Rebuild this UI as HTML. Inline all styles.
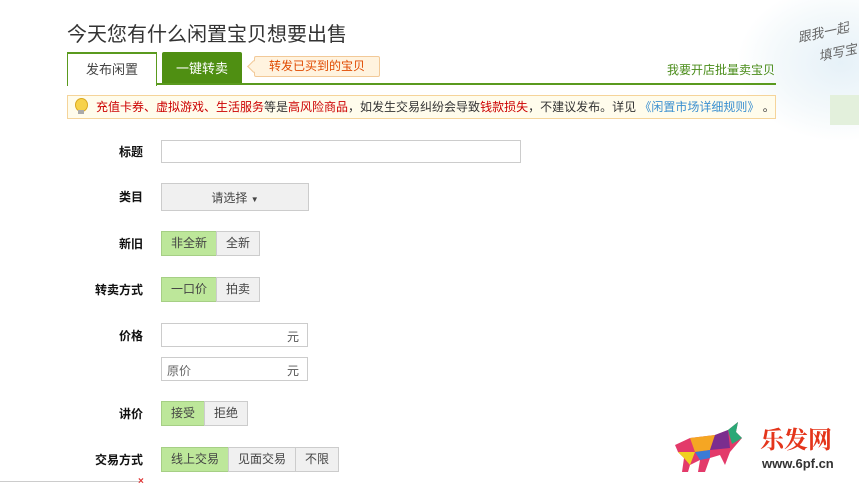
<!DOCTYPE html>
<html><head><meta charset="utf-8"><style>
body{margin:0;width:859px;height:484px;overflow:hidden;background:#fff;font-family:"Liberation Sans","Noto Sans CJK SC",sans-serif;font-size:12px;color:#333;position:relative}
.a{position:absolute}
.lab{position:absolute;right:716px;font-weight:bold;color:#111;font-size:12px;line-height:14px}
.btn{position:absolute;box-sizing:border-box;border:1px solid #ccc;background:#f0f0f0;text-align:center;color:#444;height:25px;line-height:23px}
.on{background:#bde79a;border-color:#a6cf85}
.inp{position:absolute;box-sizing:border-box;border:1px solid #ccc;background:#fff}
</style></head><body>
<div style="position:absolute;right:0;top:0;width:120px;height:140px;background:radial-gradient(ellipse at 85% 45%,#e6f1f8 0%,#f4f9fb 45%,#fff 72%)"></div>
<div class="a" style="left:797px;top:22px;color:#666;font-size:13px;transform:rotate(-12deg);font-style:italic">跟我一起</div>
<div class="a" style="left:818px;top:42px;color:#666;font-size:13px;transform:rotate(-12deg);font-style:italic">填写宝</div>
<div class="a" style="left:830px;top:95px;width:29px;height:30px;background:#e3f0dc"></div>

<div class="a" style="left:67px;top:18px;font-size:20px;color:#333">今天您有什么闲置宝贝想要出售</div>

<div class="a" style="left:67px;top:52px;width:90px;height:34px;box-sizing:border-box;border:1px solid #5a9a1e;border-bottom:none;border-top-width:2px;background:#fff;text-align:center;line-height:32px;font-size:13px;color:#444;z-index:2">发布闲置</div>
<div class="a" style="left:162px;top:52px;width:80px;height:32px;background:#4f8f12;color:#fff;text-align:center;line-height:34px;font-size:13px;border-radius:2px 2px 0 0">一键转卖</div>
<div class="a" style="left:254px;top:56px;width:126px;height:21px;box-sizing:border-box;border:1px solid #f2c998;background:#fff3df;color:#e04a00;text-align:center;line-height:19px;font-size:12px;border-radius:2px">转发已买到的宝贝</div>
<div class="a" style="left:249px;top:62px;width:8px;height:8px;background:#fff3df;border-left:1px solid #f2c998;border-bottom:1px solid #f2c998;transform:rotate(45deg)"></div>
<div class="a" style="left:667px;top:61px;color:#4a8c1a;font-size:12px">我要开店批量卖宝贝</div>
<div class="a" style="left:67px;top:83px;width:709px;height:2px;background:#5a9a1e"></div>

<div class="a" style="left:67px;top:95px;width:709px;height:24px;box-sizing:border-box;border:1px solid #f5d49a;background:#fffcec;line-height:22px;padding-left:28px;font-size:12px;color:#333;white-space:nowrap"><span style="color:#c00">充值卡券、虚拟游戏、生活服务</span>等是<span style="color:#c00">高风险商品</span>，如发生交易纠纷会导致<span style="color:#c00">钱款损失</span>，不建议发布。详见 <span style="color:#3a8fd0">《闲置市场详细规则》</span> 。</div>
<div class="a" style="left:75px;top:98px;width:11px;height:12px;border-radius:50%;background:#f7d24a;border:1px solid #d9a820"></div>
<div class="a" style="left:78px;top:110px;width:6px;height:4px;background:#aaa"></div>

<div class="lab" style="top:145px">标题</div>
<div class="inp" style="left:161px;top:140px;width:360px;height:23px"></div>

<div class="lab" style="top:190px">类目</div>
<div class="btn" style="left:161px;top:183px;width:148px;height:28px;line-height:28px">请选择 <span style="font-size:8px">▼</span></div>

<div class="lab" style="top:237px">新旧</div>
<div class="btn on" style="left:161px;top:231px;width:56px">非全新</div>
<div class="btn" style="left:216px;top:231px;width:44px">全新</div>

<div class="lab" style="top:283px">转卖方式</div>
<div class="btn on" style="left:161px;top:277px;width:56px">一口价</div>
<div class="btn" style="left:216px;top:277px;width:44px">拍卖</div>

<div class="lab" style="top:329px">价格</div>
<div class="inp" style="left:161px;top:323px;width:147px;height:24px"><span class="a" style="right:8px;top:4px;color:#555">元</span></div>
<div class="inp" style="left:161px;top:357px;width:147px;height:24px"><span class="a" style="left:5px;top:4px;color:#666">原价</span><span class="a" style="right:8px;top:4px;color:#555">元</span></div>

<div class="lab" style="top:407px">讲价</div>
<div class="btn on" style="left:161px;top:401px;width:44px">接受</div>
<div class="btn" style="left:204px;top:401px;width:44px">拒绝</div>

<div class="lab" style="top:453px">交易方式</div>
<div class="btn on" style="left:161px;top:447px;width:68px">线上交易</div>
<div class="btn" style="left:228px;top:447px;width:68px">见面交易</div>
<div class="btn" style="left:295px;top:447px;width:44px">不限</div>

<div class="a" style="left:0;top:481px;width:140px;height:1px;background:#ccc"></div>
<div class="a" style="left:138px;top:476px;color:#d33;font-size:10px;font-weight:bold">×</div>

<svg class="a" style="left:670px;top:420px" width="80" height="55" viewBox="0 0 80 55">
<polygon points="5,25 20,18 45,15 58,10 68,2 66,12 72,18 66,25 60,32 55,45 50,35 40,38 35,52 28,52 30,40 20,45 18,52 12,52 14,38 8,32" fill="#e33a6a"/>
<polygon points="20,18 45,15 40,30 25,32" fill="#f5a623"/>
<polygon points="45,15 58,10 60,28 40,30" fill="#7b2d8e"/>
<polygon points="58,10 68,2 66,12 72,18 62,24" fill="#2aa876"/>
<polygon points="25,32 40,30 40,38 30,40" fill="#3a7bd5"/>
<polygon points="8,32 14,38 20,45 25,32" fill="#f0d020"/>
</svg>
<div class="a" style="left:760px;top:420px;color:#e4351b;font-size:24px;font-weight:bold;font-family:'Noto Serif CJK SC',serif">乐发网</div>
<div class="a" style="left:762px;top:456px;color:#333;font-size:13px;font-weight:bold">www.6pf.cn</div>
</body></html>
